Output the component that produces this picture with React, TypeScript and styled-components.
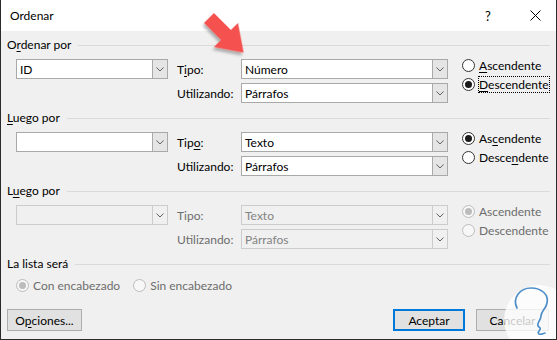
import styled, {createGlobalStyle} from 'styled-components';

const GlobalStyle = createGlobalStyle`
  html, body {
    margin: 0;
    padding: 0;
    background: #fff;
  }
`;

const Dialog = styled.div`
  position: relative;
  width: 557px;
  height: 340px;
  box-sizing: border-box;
  border: 1px solid #2b2b2b;
  border-top: none;
  background: #f0f0f0;
  display: flex;
  flex-direction: column;
  overflow: hidden;
  font-family: Lato, 'Noto Sans', sans-serif;
  font-size: 12px;
  color: #000;
`;

const TitleBar = styled.div`
  height: 31px;
  flex: none;
  background: #fff;
  display: flex;
  align-items: center;
  padding-left: 9px;
`;

const Title = styled.div`
  flex: 1;
  font-size: 12px;
`;

const TitleButton = styled.div<{width: number}>`
  width: ${(p) => p.width}px;
  height: 31px;
  display: flex;
  align-items: center;
  justify-content: center;
  font-size: 13px;
`;

const Body = styled.div`
  flex: 1;
  display: flex;
  flex-direction: column;
  padding: 6px 6px 8px 6px;
`;

const GroupHeader = styled.div`
  display: flex;
  align-items: center;
  gap: 7px;
  height: 16px;
  line-height: 16px;

  &::after {
    content: '';
    flex: 1;
    height: 1px;
    background: #dadada;
  }
`;

const GroupGrid = styled.div`
  display: grid;
  grid-template-columns: 161px 64px 221px 1fr;
  grid-template-rows: 20px 20px;
  row-gap: 4px;
  margin: 6px 0 7px 9px;
`;

const FieldLabel = styled.div<{disabled?: boolean; row: number}>`
  grid-column: 2;
  grid-row: ${(p) => p.row};
  display: flex;
  align-items: center;
  color: ${(p) => (p.disabled ? '#6d6d6d' : '#000')};
`;

const ComboBox = styled.div<{disabled?: boolean; width: number; col: number; row: number}>`
  grid-column: ${(p) => p.col};
  grid-row: ${(p) => p.row};
  width: ${(p) => p.width}px;
  height: 20px;
  box-sizing: border-box;
  display: flex;
  border: 1px solid ${(p) => (p.disabled ? '#cccccc' : '#a9a9a9')};
  background: ${(p) => (p.disabled ? '#f0f0f0' : '#fff')};
  color: ${(p) => (p.disabled ? '#838383' : '#000')};
`;

const ComboText = styled.div`
  flex: 1;
  display: flex;
  align-items: center;
  padding-left: 3px;
  white-space: nowrap;
`;

const ComboArrow = styled.div<{disabled?: boolean}>`
  width: 16px;
  margin: -1px -1px -1px 0;
  box-sizing: border-box;
  border: 1px solid ${(p) => (p.disabled ? '#cccccc' : '#a9a9a9')};
  background: ${(p) => (p.disabled ? '#f0f0f0' : '#e5e5e5')};
  display: flex;
  align-items: center;
  justify-content: center;
`;

const RadioColumn = styled.div`
  grid-column: 4;
  grid-row: 1 / 3;
  margin-top: -3px;
  display: flex;
  flex-direction: column;
`;

const RadioItem = styled.div<{disabled?: boolean}>`
  height: 19px;
  display: flex;
  align-items: center;
  gap: 4px;
  white-space: nowrap;
  color: ${(p) => (p.disabled ? '#6d6d6d' : '#000')};
`;

const RadioCircle = styled.span<{checked?: boolean; disabled?: boolean}>`
  width: 13px;
  height: 13px;
  flex: none;
  box-sizing: border-box;
  border-radius: 50%;
  border: 1px solid ${(p) => (p.disabled ? '#bcbcbc' : '#333')};
  background: ${(p) => (p.disabled ? '#f7f7f7' : '#fff')};
  display: flex;
  align-items: center;
  justify-content: center;

  &::after {
    content: '';
    display: ${(p) => (p.checked ? 'block' : 'none')};
    width: 7px;
    height: 7px;
    border-radius: 50%;
    background: ${(p) => (p.disabled ? '#bcbcbc' : '#1a1a1a')};
  }
`;

const RadioText = styled.span<{focused?: boolean}>`
  outline: ${(p) => (p.focused ? '1px dotted #000' : 'none')};
  outline-offset: 0;
  line-height: 15px;
`;

const HeaderRadios = styled.div`
  display: flex;
  gap: 13px;
  margin: 4px 0 0 9px;
`;

const ButtonRow = styled.div`
  margin-top: auto;
  display: flex;
  align-items: center;
  padding-right: 1px;
`;

const Button = styled.div<{primary?: boolean; width: number}>`
  width: ${(p) => p.width}px;
  height: 22px;
  box-sizing: border-box;
  display: flex;
  align-items: center;
  justify-content: center;
  background: #e1e1e1;
  border: ${(p) => (p.primary ? '2px solid #0078d7' : '1px solid #adadad')};
`;

const Spacer = styled.div`
  flex: 1;
`;

const ButtonGap = styled.div`
  width: 11px;
`;

const Key = styled.span`
  text-decoration: underline;
  text-underline-offset: 2px;
`;

const Overlay = styled.svg`
  position: absolute;
  pointer-events: none;
`;

const Chevron = () => (
  <svg width="8" height="5" viewBox="0 0 8 5">
    <path d="M0.5 0.5 L4 4 L7.5 0.5" fill="none" stroke="#606060" strokeWidth="1" />
  </svg>
);

const Combo = ({
  value,
  width,
  col,
  row,
  disabled,
}: {
  value: string;
  width: number;
  col: number;
  row: number;
  disabled?: boolean;
}) => (
  <ComboBox width={width} col={col} row={row} disabled={disabled}>
    <ComboText>{value}</ComboText>
    <ComboArrow disabled={disabled}>
      <Chevron />
    </ComboArrow>
  </ComboBox>
);

const Radio = ({
  label,
  checked,
  disabled,
  focused,
}: {
  label: React.ReactNode;
  checked?: boolean;
  disabled?: boolean;
  focused?: boolean;
}) => (
  <RadioItem disabled={disabled}>
    <RadioCircle checked={checked} disabled={disabled} />
    <RadioText focused={focused}>{label}</RadioText>
  </RadioItem>
);

interface SortGroupProps {
  title: React.ReactNode;
  field: string;
  type: string;
  using: string;
  tipoLabel: React.ReactNode;
  ascLabel: React.ReactNode;
  descLabel: React.ReactNode;
  descending?: boolean;
  disabled?: boolean;
  focusDesc?: boolean;
}

const SortGroup = ({
  title,
  field,
  type,
  using,
  tipoLabel,
  ascLabel,
  descLabel,
  descending,
  disabled,
  focusDesc,
}: SortGroupProps) => (
  <>
    <GroupHeader>{title}</GroupHeader>
    <GroupGrid>
      <Combo value={field} width={152} col={1} row={1} disabled={disabled} />
      <FieldLabel row={1} disabled={disabled}>
        {tipoLabel}
      </FieldLabel>
      <Combo value={type} width={207} col={3} row={1} disabled={disabled} />
      <FieldLabel row={2} disabled={disabled}>
        Utilizando:
      </FieldLabel>
      <Combo value={using} width={207} col={3} row={2} disabled={disabled} />
      <RadioColumn>
        <Radio label={ascLabel} checked={!descending} disabled={disabled} />
        <Radio label={descLabel} checked={descending} disabled={disabled} focused={focusDesc} />
      </RadioColumn>
    </GroupGrid>
  </>
);

export default function App() {
  return (
    <>
      <GlobalStyle />
      <Dialog>
        <TitleBar>
          <Title>Ordenar</Title>
          <TitleButton width={52}>?</TitleButton>
          <TitleButton width={42}>
            <svg width="11" height="11" viewBox="0 0 11 11">
              <path d="M0.5 0.5 L10.5 10.5 M10.5 0.5 L0.5 10.5" stroke="#000" strokeWidth="1" />
            </svg>
          </TitleButton>
        </TitleBar>
        <Body>
          <SortGroup
            title={
              <span>
                O<Key>r</Key>denar por
              </span>
            }
            field="ID"
            type="Número"
            using="Párrafos"
            tipoLabel={
              <span>
                T<Key>i</Key>po:
              </span>
            }
            ascLabel={
              <span>
                <Key>A</Key>scendente
              </span>
            }
            descLabel={
              <span>
                <Key>D</Key>escendente
              </span>
            }
            descending
            focusDesc
          />
          <SortGroup
            title={
              <span>
                <Key>L</Key>uego por
              </span>
            }
            field=""
            type="Texto"
            using="Párrafos"
            tipoLabel={
              <span>
                Tip<Key>o</Key>:
              </span>
            }
            ascLabel={
              <span>
                As<Key>c</Key>endente
              </span>
            }
            descLabel={
              <span>
                Desce<Key>n</Key>dente
              </span>
            }
          />
          <SortGroup
            title={
              <span>
                L<Key>u</Key>ego por
              </span>
            }
            field=""
            type="Texto"
            using="Párrafos"
            tipoLabel="Tipo:"
            ascLabel="Ascendente"
            descLabel="Descendente"
            disabled
          />
          <GroupHeader>La lista será</GroupHeader>
          <HeaderRadios>
            <Radio label="Con encabezado" checked disabled />
            <Radio label="Sin encabezado" disabled />
          </HeaderRadios>
          <ButtonRow>
            <Button width={75}>
              <span>
                O<Key>p</Key>ciones...
              </span>
            </Button>
            <Spacer />
            <Button width={72} primary>
              Aceptar
            </Button>
            <ButtonGap />
            <Button width={73}>Cancelar</Button>
          </ButtonRow>
        </Body>

        <Overlay
          style={{left: 188, top: 2, width: 70, height: 62}}
          viewBox="188 2 70 62"
        >
          <defs>
            <filter id="arrowShadow" x="-30%" y="-30%" width="160%" height="160%">
              <feDropShadow dx="1" dy="3" stdDeviation="1.5" floodColor="#000" floodOpacity="0.3" />
            </filter>
          </defs>
          <g transform="translate(208 18) rotate(45)" filter="url(#arrowShadow)">
            <polygon points="0,-7 24,-7 24,-17 49,0 24,17 24,7 0,7" fill="#f5514f" />
          </g>
        </Overlay>

        <Overlay
          style={{left: 499, top: 281, width: 58, height: 59}}
          viewBox="499 281 58 59"
        >
          <circle cx="538" cy="320" r="35" fill="#fff" opacity="0.78" />
          <path
            d="M516 308 C511 298 519 288 530 288 C541 288 548 295 546 303 C545 309 540 311 540 316 C540 321 534 324 538 327 C542 329 535 332 538 334 C540 335 543 333 544 333"
            fill="none"
            stroke="#4f8fc9"
            strokeWidth="1.7"
            strokeLinecap="round"
          />
        </Overlay>
      </Dialog>
    </>
  );
}
